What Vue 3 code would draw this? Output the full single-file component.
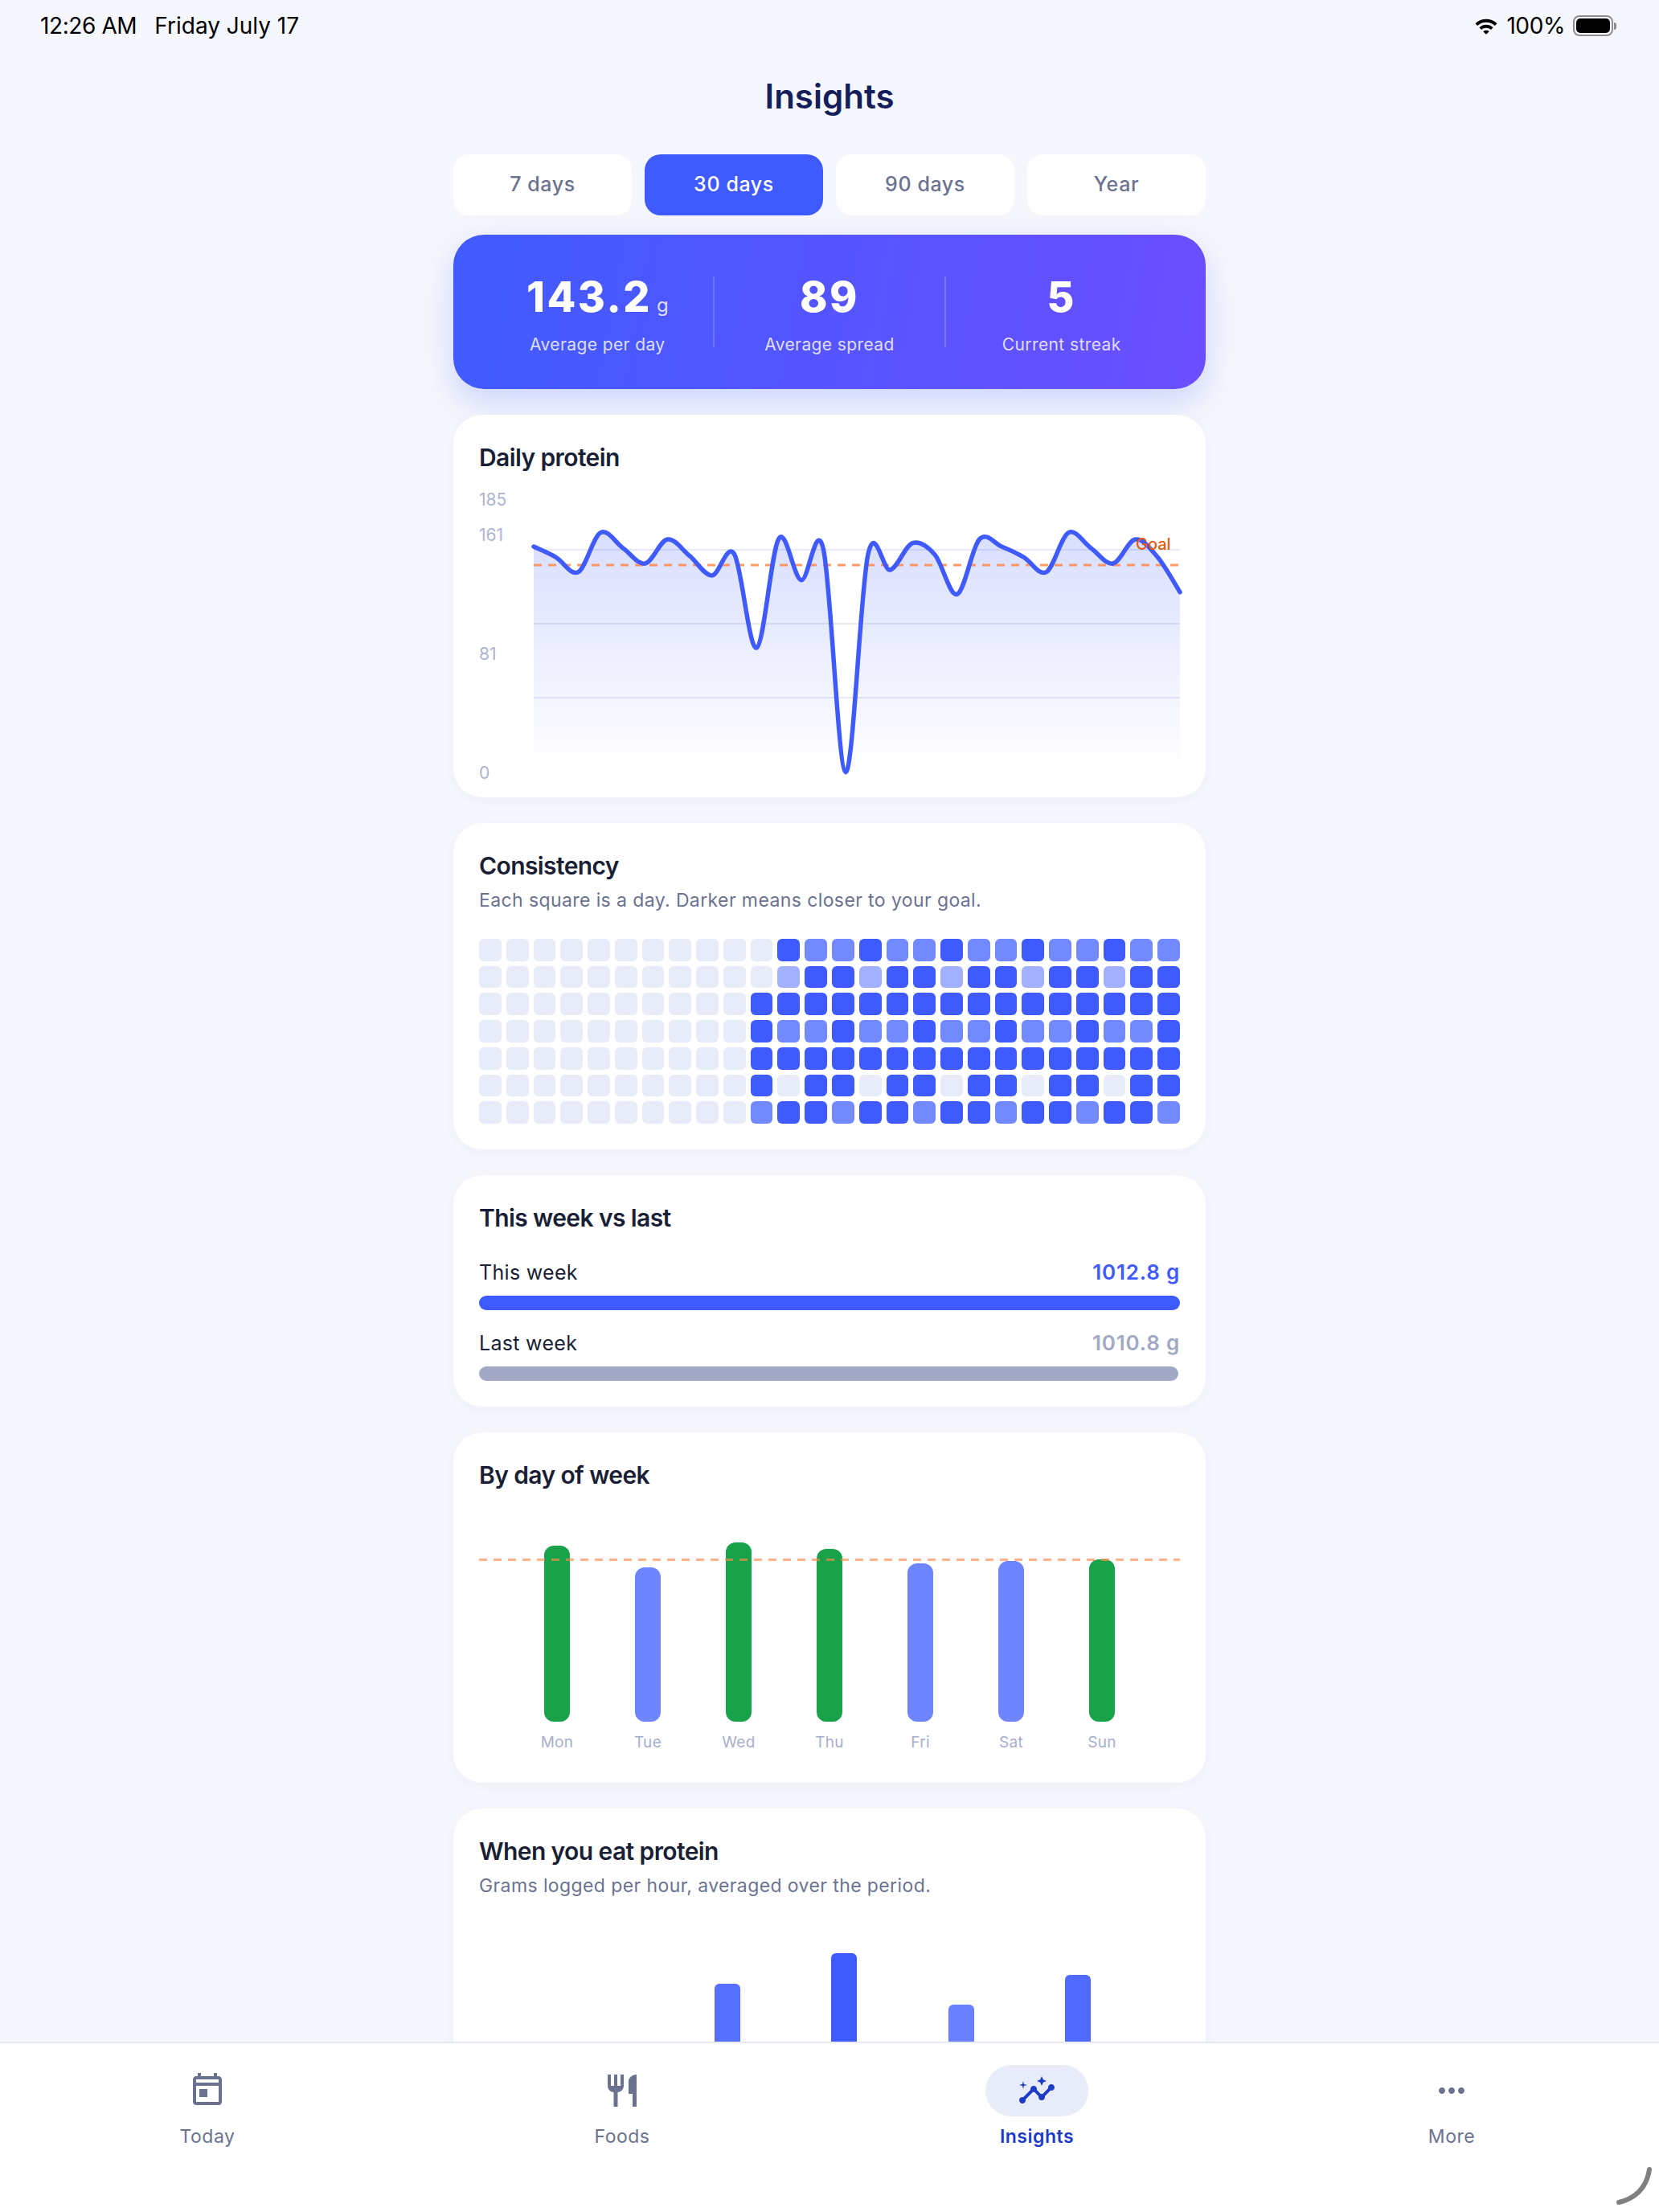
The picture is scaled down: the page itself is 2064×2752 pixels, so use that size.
<script setup>
const tabs = [
  { label: '7 days', on: false },
  { label: '30 days', on: true },
  { label: '90 days', on: false },
  { label: 'Year', on: false },
]

const Y = [510, 550, 605, 458, 515, 573, 483, 545, 618, 538, 888, 480, 635, 520, 1352, 540, 597, 497, 540, 688, 483, 510, 550, 605, 458, 515, 573, 483, 550, 680]
const pts = Y.map((v, i) => [68 + (i * 804) / 29, v / 3 + 510 - 590])
const f = (n) => n.toFixed(1)
let line = `M${f(pts[0][0])} ${f(pts[0][1])}`
for (let i = 0; i < pts.length - 1; i++) {
  const p0 = pts[Math.max(i - 1, 0)]
  const p1 = pts[i]
  const p2 = pts[i + 1]
  const p3 = pts[Math.min(i + 2, pts.length - 1)]
  const c1x = p1[0] + (p2[0] - p0[0]) / 6
  const c1y = p1[1] + (p2[1] - p0[1]) / 6
  const c2x = p2[0] - (p3[0] - p1[0]) / 6
  const c2y = p2[1] - (p3[1] - p1[1]) / 6
  line += ` C${f(c1x)} ${f(c1y)} ${f(c2x)} ${f(c2y)} ${f(p2[0])} ${f(p2[1])}`
}
const area = `${line} L872 370 L68 370 Z`

const rows = [
  '...........DMMDMMDMMDMMDMM',
  '...........LDDLDDLDDLDDLDD',
  '..........DDDDDDDDDDDDDDDD',
  '..........DMMDMMDMMDMMDMMD',
  '..........DDDDDDDDDDDDDDDD',
  '..........D.DD.DD.DD.DD.DD',
  '..........MDDMDDMDDMDDMDDM',
]
const heat = []
for (let c = 0; c < 26; c++) for (let r = 0; r < 7; r++) heat.push(rows[r][c])
const heatClass = { '.': 'e', D: 'd', M: 'm', L: 'l' }

const days = [
  { d: 'Mon', h: 219, good: true },
  { d: 'Tue', h: 192, good: false },
  { d: 'Wed', h: 223, good: true },
  { d: 'Thu', h: 215, good: true },
  { d: 'Fri', h: 197, good: false },
  { d: 'Sat', h: 200, good: false },
  { d: 'Sun', h: 202, good: true },
]

const hours = [
  { h: 0, c: '#3f5bff' },
  { h: 0, c: '#3f5bff' },
  { h: 172, c: '#5570ff' },
  { h: 210, c: '#3f5bff' },
  { h: 146, c: '#6a80ff' },
  { h: 183, c: '#4f6aff' },
]

const nav = [
  { label: 'Today', path: 'M19 3h-1V1h-2v2H8V1H6v2H5c-1.11 0-1.99.9-1.99 2L3 19c0 1.1.89 2 2 2h14c1.1 0 2-.9 2-2V5c0-1.1-.9-2-2-2zm0 16H5V9h14v10zm0-12H5V5h14v2zM7 11h5v5H7z' },
  { label: 'Foods', path: 'M11 9H9V2H7v7H5V2H3v7c0 2.12 1.66 3.84 3.75 3.97V22h2.5v-9.03C11.34 12.84 13 11.12 13 9V2h-2v7zm5-3v8h2.5v8H21V2c-2.76 0-5 2.24-5 4z' },
  { label: 'Insights', on: true, path: 'M21 8c-1.45 0-2.26 1.44-1.93 2.51l-3.55 3.56c-.3-.09-.74-.09-1.04 0l-2.55-2.55C12.27 10.45 11.46 9 10 9c-1.45 0-2.27 1.44-1.93 2.52l-4.56 4.55C2.44 15.74 1 16.55 1 18c0 1.1.9 2 2 2 1.45 0 2.26-1.44 1.93-2.51l4.55-4.56c.3.09.74.09 1.04 0l2.55 2.55C12.73 16.55 13.54 18 15 18c1.45 0 2.27-1.44 1.93-2.52l3.56-3.55c1.07.33 2.51-.48 2.51-1.93 0-1.1-.9-2-2-2zM15 9l.94-2.07L18 6l-2.06-.93L15 3l-.92 2.07L12 6l2.08.93zM3.5 11L4 9l2-.5L4 8l-.5-2L3 8l-2 .5L3 9z' },
  { label: 'More', path: 'M6 10c-1.1 0-2 .9-2 2s.9 2 2 2 2-.9 2-2-.9-2-2-2zm12 0c-1.1 0-2 .9-2 2s.9 2 2 2 2-.9 2-2-.9-2-2-2zm-6 0c-1.1 0-2 .9-2 2s.9 2 2 2 2-.9 2-2-.9-2-2-2z' },
]
</script>

<template>
  <div class="app">
    <div class="status">
      <div class="time"><span>12:26 AM</span><span class="date">Friday July 17</span></div>
      <div class="sys">
        <svg class="wifi" width="30" height="22" viewBox="0 0 30 22">
          <path d="M1.5 8.2C9 1 21 1 28.5 8.2l-2.6 2.7C19.8 5.2 10.2 5.2 4.100 10.900z" />
          <path d="M6.400 13.200c4.800-4.500 12.400-4.500 17.200 0l-2.700 2.700c-3.300-3-8.500-3-11.800 0z" />
          <path d="M11.300 18.200c2.100-1.900 5.300-1.900 7.400 0L15 21.800z" />
        </svg>
        <span>100%</span>
        <div class="battery"><div class="cell"></div></div>
        <div class="tip"></div>
      </div>
    </div>

    <div class="scroll">
      <h1 class="page-title">Insights</h1>
      <div class="column">
        <div class="tabs">
          <div v-for="t in tabs" :key="t.label" class="tab" :class="{ on: t.on }">{{ t.label }}</div>
        </div>

        <div class="hero">
          <div class="stat">
            <div class="value">143.2<span class="unit">g</span></div>
            <div class="cap">Average per day</div>
          </div>
          <div class="rule"></div>
          <div class="stat">
            <div class="value">89</div>
            <div class="cap">Average spread</div>
          </div>
          <div class="rule"></div>
          <div class="stat">
            <div class="value">5</div>
            <div class="cap">Current streak</div>
          </div>
        </div>

        <section class="card">
          <h2>Daily protein</h2>
          <svg class="line-chart" width="872" height="370" viewBox="0 0 872 370">
            <defs>
              <linearGradient id="fill" gradientUnits="userSpaceOnUse" x1="0" y1="70" x2="0" y2="370">
                <stop offset="0" stop-color="#3f5bff" stop-opacity="0.2" />
                <stop offset="1" stop-color="#3f5bff" stop-opacity="0" />
              </linearGradient>
            </defs>
            <line x1="68" x2="872" y1="94" y2="94" class="grid" />
            <line x1="68" x2="872" y1="186" y2="186" class="grid" />
            <line x1="68" x2="872" y1="278" y2="278" class="grid" />
            <path :d="area" fill="url(#fill)" />
            <line x1="68" x2="872" y1="113" y2="113" class="goal" />
            <path :d="line" class="curve" />
            <text x="0" y="31" class="axis">185</text>
            <text x="0" y="75" class="axis">161</text>
            <text x="0" y="223" class="axis">81</text>
            <text x="0" y="371" class="axis">0</text>
            <text x="817" y="87" class="goal-text">Goal</text>
          </svg>
        </section>

        <section class="card">
          <h2>Consistency</h2>
          <p class="sub">Each square is a day. Darker means closer to your goal.</p>
          <div class="heat">
            <div v-for="(h, i) in heat" :key="i" class="sq" :class="heatClass[h]"></div>
          </div>
        </section>

        <section class="card">
          <h2>This week vs last</h2>
          <div class="cmp first">
            <span>This week</span><b class="now">1012.8 g</b>
          </div>
          <div class="bar now-bar"></div>
          <div class="cmp">
            <span>Last week</span><b class="prev">1010.8 g</b>
          </div>
          <div class="bar prev-bar"></div>
        </section>

        <section class="card">
          <h2>By day of week</h2>
          <div class="week">
            <div class="week-goal"></div>
            <div v-for="d in days" :key="d.d" class="day">
              <div class="day-bar" :class="d.good ? 'good' : 'low'" :style="{ height: d.h + 'px' }"></div>
              <span>{{ d.d }}</span>
            </div>
          </div>
        </section>

        <section class="card">
          <h2>When you eat protein</h2>
          <p class="sub">Grams logged per hour, averaged over the period.</p>
          <div class="hours">
            <div v-for="(h, i) in hours" :key="i" class="hour">
              <div v-if="h.h" class="hour-bar" :style="{ height: h.h + 'px', background: h.c }"></div>
            </div>
          </div>
        </section>
      </div>
    </div>

    <nav class="nav">
      <div v-for="n in nav" :key="n.label" class="nav-item" :class="{ on: n.on }">
        <div class="pill">
          <svg width="48" height="48" viewBox="0 0 24 24"><path :d="n.path" /></svg>
        </div>
        <span>{{ n.label }}</span>
      </div>
    </nav>

    <svg class="corner" width="64" height="64" viewBox="0 0 64 64">
      <path d="M52 11C49 31 38 46 14 52" />
    </svg>
  </div>
</template>

<style>
html, body { margin: 0; padding: 0; background: #f5f7fc; }
</style>

<style scoped>
* { box-sizing: border-box; }
.app {
  position: relative;
  width: 2064px;
  height: 2752px;
  display: flex;
  flex-direction: column;
  overflow: hidden;
  background: #f5f7fc;
  font-family: Inter, "Noto Sans", sans-serif;
}
.status {
  flex: none;
  height: 64px;
  padding: 0 53px 0 50px;
  display: flex;
  justify-content: space-between;
  align-items: center;
  font-size: 28px;
  color: #000;
  letter-spacing: -0.4px;
}
.date { margin-left: 22px; letter-spacing: 0; }
.sys { display: flex; align-items: center; }
.wifi { margin-right: 10px; fill: #000; }
.battery {
  margin-left: 10px;
  width: 50px;
  height: 26px;
  border: 2px solid #8e8e8e;
  border-radius: 8px;
  padding: 2px;
}
.cell { width: 100%; height: 100%; border-radius: 5px; background: #000; }
.tip { width: 3px; height: 9px; margin-left: 1px; border-radius: 0 3px 3px 0; background: #8e8e8e; }

.scroll { flex: 1; min-height: 0; overflow: hidden; }
.page-title {
  margin: 0;
  height: 112px;
  line-height: 112px;
  text-align: center;
  font-size: 42px;
  font-weight: 600;
  color: #141e5a;
}
.column { width: 936px; margin: 16px auto 0; }
.tabs { display: flex; gap: 16px; }
.tab {
  flex: 1;
  height: 76px;
  line-height: 74px;
  text-align: center;
  background: #fff;
  border-radius: 20px;
  font-size: 25px;
  font-weight: 500;
  letter-spacing: 0.6px;
  color: #6b7290;
}
.tab.on { background: #3f5bff; color: #fff; }

.hero {
  margin-top: 24px;
  height: 192px;
  padding: 0 36px;
  display: flex;
  align-items: center;
  border-radius: 38px;
  background: linear-gradient(100deg, #3f5bff 0%, #6b4eff 100%);
  box-shadow: 0 16px 40px rgba(63, 91, 255, 0.22);
  color: #fff;
  text-align: center;
}
.stat { flex: 1; padding-top: 8px; }
.value { height: 60px; line-height: 60px; font-size: 52px; font-weight: 800; letter-spacing: 2.5px; }
.unit { margin-left: 6px; font-size: 24px; font-weight: 400; opacity: 0.8; letter-spacing: 0; }
.cap { margin-top: 14px; line-height: 30px; font-size: 21px; letter-spacing: 0.4px; opacity: 0.8; }
.rule { width: 2px; height: 88px; background: rgba(255, 255, 255, 0.2); }

.card {
  margin-top: 32px;
  padding: 32px 32px 32px;
  background: #fff;
  border-radius: 36px;
  box-shadow: 0 4px 16px rgba(30, 40, 90, 0.04);
}
h2 {
  margin: 0;
  height: 42px;
  line-height: 42px;
  font-size: 30px;
  font-weight: 600;
  letter-spacing: -0.6px;
  color: #1a1f36;
}
.sub {
  margin: 5px 0 0;
  line-height: 34px;
  font-size: 23px;
  letter-spacing: 0.4px;
  color: #6b7290;
}
.line-chart { display: block; overflow: visible; }
.grid { stroke: #e6eaf5; stroke-width: 2; }
.goal { stroke: #ff8a4c; stroke-width: 3; stroke-dasharray: 10 8; opacity: 0.85; }
.curve { fill: none; stroke: #3f5bff; stroke-width: 5.500; stroke-linejoin: round; stroke-linecap: round; }
.axis { font-size: 21px; fill: #aeb4d0; dominant-baseline: central; }
.goal-text { font-size: 20px; font-weight: 500; fill: #e8590c; dominant-baseline: central; }

.heat {
  margin-top: 31px;
  display: grid;
  grid-template-columns: repeat(26, 1fr);
  grid-template-rows: repeat(7, 27.71px);
  grid-auto-flow: column;
  gap: 6px;
}
.sq { border-radius: 6px; }
.sq.e { background: #e8ecf8; }
.sq.d { background: #3f5bff; }
.sq.m { background: #7289ff; }
.sq.l { background: #a2b1ff; }

.cmp {
  margin-top: 23px;
  display: flex;
  justify-content: space-between;
  line-height: 36px;
  font-size: 25px;
  letter-spacing: 0.3px;
  color: #1a1f36;
}
.cmp.first { margin-top: 29px; }
.cmp b { font-weight: 600; font-size: 26px; letter-spacing: 0.8px; }
.now { color: #3f5bff; }
.prev { color: #a2a9c4; }
.bar { margin-top: 11px; height: 18px; border-radius: 9px; }
.now-bar { background: #3f5bff; }
.prev-bar { background: #a2a9c4; width: 99.8%; }

.week {
  position: relative;
  height: 330px;
  padding: 0 40.5px;
  display: flex;
}
.week-goal {
  position: absolute;
  left: 0;
  right: 0;
  top: 83px;
  height: 3px;
  background: repeating-linear-gradient(to right, rgba(255, 138, 76, 0.65) 0 10px, transparent 10px 18px);
}
.day {
  flex: 1;
  height: 330px;
  display: flex;
  flex-direction: column;
  align-items: center;
  justify-content: flex-end;
}
.day-bar { width: 32px; border-radius: 12px; }
.day-bar.good { background: #18a34a; }
.day-bar.low { background: #6f85ff; }
.day span {
  height: 44px;
  padding-top: 12px;
  line-height: 28px;
  font-size: 19px;
  letter-spacing: 0.3px;
  color: #a8afcb;
}

.hours { margin-top: 31px; height: 246px; display: flex; }
.hour { flex: 1; display: flex; align-items: flex-end; padding-left: 2.5px; }
.hour-bar { width: 32px; border-radius: 6px 6px 0 0; }

.nav {
  flex: none;
  height: 212px;
  display: flex;
  background: #fff;
  border-top: 2px solid #e6eaf5;
}
.nav-item {
  flex: 1;
  padding-top: 27px;
  display: flex;
  flex-direction: column;
  align-items: center;
  font-size: 23px;
  letter-spacing: 0.5px;
  color: #6b7290;
}
.pill {
  width: 128px;
  height: 64px;
  border-radius: 32px;
  display: flex;
  align-items: center;
  justify-content: center;
}
.pill svg { fill: #6b7290; }
.nav-item span { margin-top: 8px; line-height: 34px; }
.nav-item.on { color: #1d3bc8; font-weight: 600; }
.nav-item.on .pill { background: #e8ecf8; }
.nav-item.on .pill svg { fill: #1d3bc8; }

.corner { position: absolute; right: 0; bottom: 0; }
.corner path { fill: none; stroke: #808080; stroke-width: 6; stroke-linecap: round; }
</style>
